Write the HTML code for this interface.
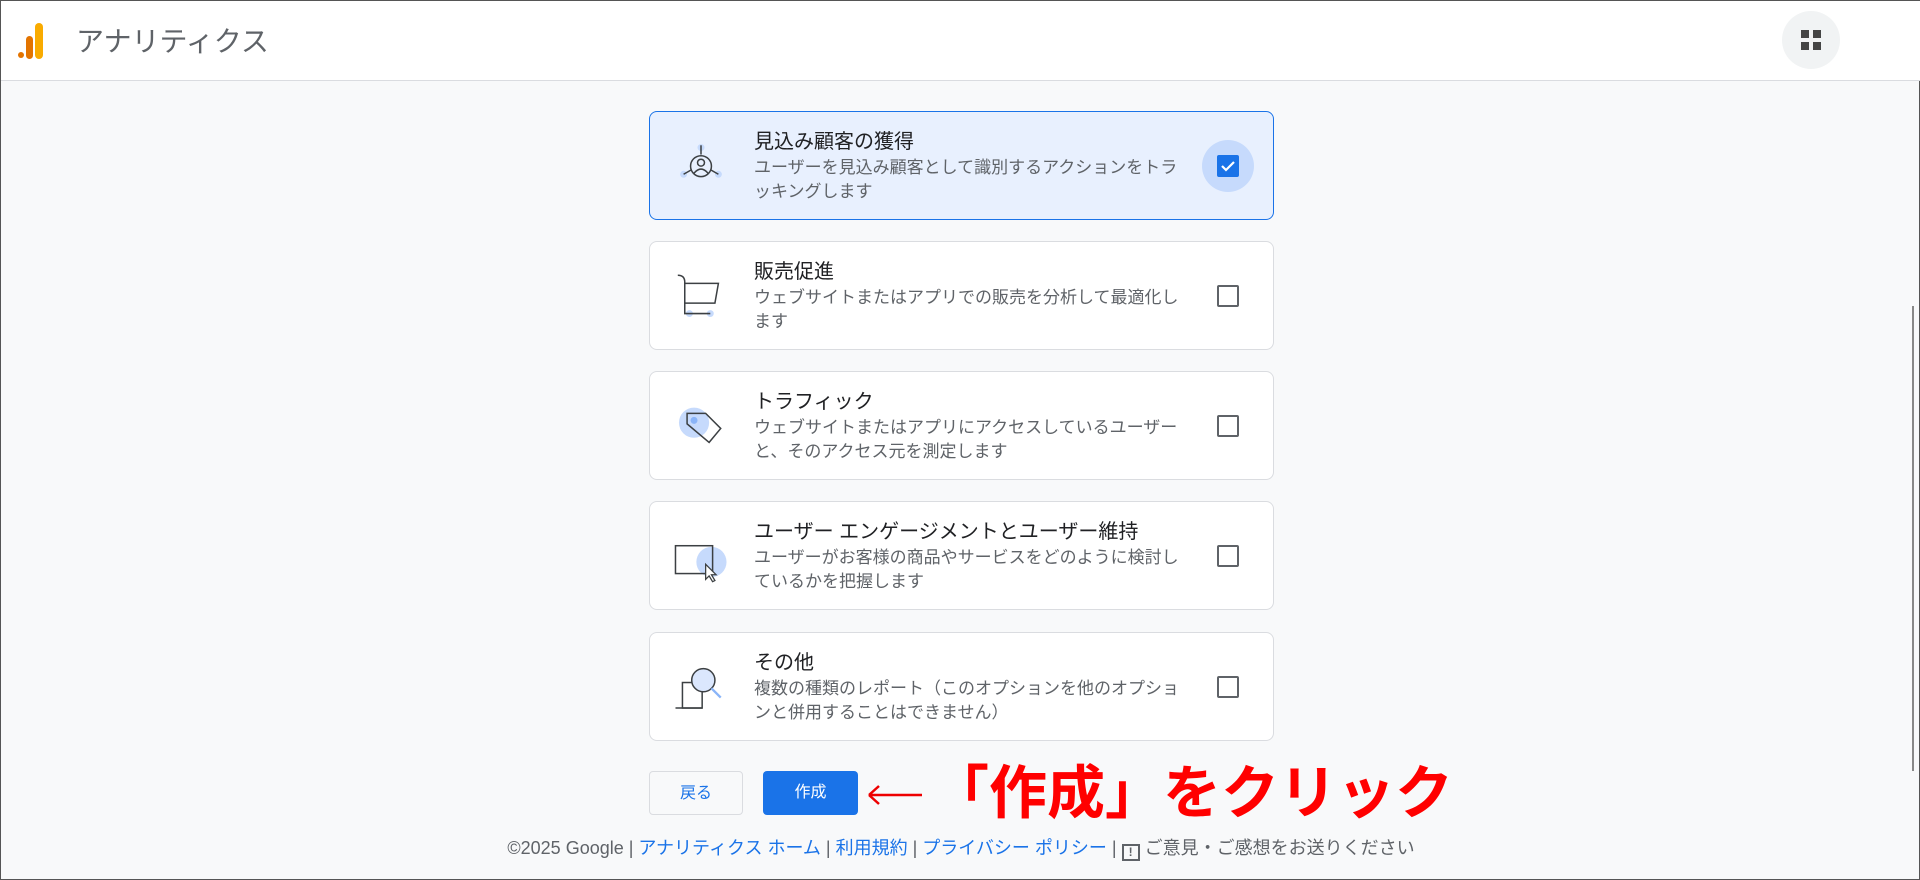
<!DOCTYPE html>
<html><head><meta charset="utf-8">
<style>
*{box-sizing:border-box;margin:0;padding:0}
body{width:1920px;height:880px;overflow:hidden;background:#f8f9fa;font-family:"Liberation Sans","Noto Sans CJK JP",sans-serif;position:relative;border:1px solid #555}
.hdr{position:absolute;left:0;top:0;width:1920px;height:80px;background:#fff;border-bottom:1px solid #dadce0}
.title{position:absolute;left:75px;top:19px;font-size:28px;color:#5f6368}
.apps{position:absolute;left:1781px;top:10px;width:58px;height:58px;border-radius:50%;background:#f1f3f4}
.card{position:absolute;left:648px;width:625px;height:109px;background:#fff;border:1px solid #dadce0;border-radius:8px}
.card.sel{background:#e8f0fe;border-color:#1a73e8}
.card .ic{position:absolute;left:22px;top:24px;width:58px;height:58px}
.card .t{position:absolute;left:104px;top:13px;font-size:20px;color:#202124}
.card .d{position:absolute;left:104px;top:44px;width:428px;font-size:17px;line-height:24px;color:#5f6368}
.cb{position:absolute;left:567px;top:43px;width:22px;height:22px;border:2px solid #5f6368;border-radius:2px}
.sel .halo{position:absolute;left:552px;top:28px;width:52px;height:52px;border-radius:50%;background:#c6dafc}
.sel .cb{background:#1a73e8;border-color:#1a73e8}
.btn{position:absolute;top:770px;height:44px;border-radius:4px;font-size:16px;text-align:center;line-height:44px}
.foot{position:absolute;left:0;width:1920px;top:833px;text-align:center;font-size:18px;color:#5f6368}
.foot a{color:#1a73e8;text-decoration:none}
</style></head><body>
<div class="hdr">
<svg style="position:absolute;left:17px;top:22px" width="26" height="36" viewBox="0 0 26 36"><rect x="17" y="0" width="8" height="36" rx="4" fill="#f9ab00"/><rect x="8" y="13" width="7" height="23" rx="3.5" fill="#e37400"/><circle cx="3" cy="32" r="3" fill="#e37400"/></svg>
<div class="title">アナリティクス</div>
<div class="apps"><svg style="position:absolute;left:19px;top:19px" width="20" height="20"><rect x="0" y="0" width="8" height="8" fill="#444"/><rect x="12" y="0" width="8" height="8" fill="#444"/><rect x="0" y="12" width="8" height="8" fill="#444"/><rect x="12" y="12" width="8" height="8" fill="#444"/></svg></div>
</div>

<div class="card sel" style="top:110px">
<svg class="ic" viewBox="0 0 50 50"><circle cx="25" cy="10" r="3" fill="#c6dafc"/><circle cx="10" cy="33" r="3" fill="#c6dafc"/><circle cx="40" cy="33" r="3" fill="#c6dafc"/><g fill="none" stroke="#3c4043" stroke-width="1.3"><line x1="25" y1="8" x2="25" y2="16"/><line x1="10" y1="33" x2="17" y2="29"/><line x1="40" y1="33" x2="33" y2="29"/><circle cx="25" cy="26" r="9"/><circle cx="25" cy="23" r="3"/><path d="M19 32 Q25 25 31 32"/></g></svg>
<div class="t">見込み顧客の獲得</div>
<div class="d">ユーザーを見込み顧客として識別するアクションをトラッキングします</div>
<div class="halo"></div>
<div class="cb"><svg width="18" height="18" viewBox="0 0 18 18"><path d="M3 9l4 4 8-8" fill="none" stroke="#fff" stroke-width="2.2"/></svg></div>
</div>

<div class="card" style="top:240px">
<svg class="ic" viewBox="0 0 50 50"><circle cx="15" cy="41" r="3" fill="#c6dafc"/><circle cx="33" cy="41" r="3" fill="#c6dafc"/><g fill="none" stroke="#3c4043" stroke-width="1.3"><path d="M5 8 Q11 8 11 14 V41 H33"/><path d="M11 15 H40 L37 32 H11"/></g></svg>
<div class="t">販売促進</div>
<div class="d">ウェブサイトまたはアプリでの販売を分析して最適化します</div>
<div class="cb"></div>
</div>

<div class="card" style="top:370px">
<svg class="ic" viewBox="0 0 50 50"><circle cx="19" cy="23" r="13" fill="#c6dafc"/><circle cx="19" cy="21" r="3" fill="#8ab4f8"/><path d="M13 15 H29 L42 28 L32 40 L13 24 Z" fill="none" stroke="#3c4043" stroke-width="1.3"/></svg>
<div class="t">トラフィック</div>
<div class="d">ウェブサイトまたはアプリにアクセスしているユーザーと、そのアクセス元を測定します</div>
<div class="cb"></div>
</div>

<div class="card" style="top:500px">
<svg class="ic" viewBox="0 0 50 50"><circle cx="34" cy="31" r="13" fill="#c6dafc"/><rect x="3" y="17" width="32" height="24" fill="none" stroke="#3c4043" stroke-width="1.3"/><path d="M29 33 L29 46 L32 43 L35 48 L37 47 L34 42 L38 42 Z" fill="#fff" stroke="#3c4043" stroke-width="1.1"/></svg>
<div class="t">ユーザー エンゲージメントとユーザー維持</div>
<div class="d">ユーザーがお客様の商品やサービスをどのように検討しているかを把握します</div>
<div class="cb"></div>
</div>

<div class="card" style="top:631px">
<svg class="ic" viewBox="0 0 50 50"><g fill="none" stroke="#3c4043" stroke-width="1.3"><rect x="9" y="22" width="17" height="22"/><circle cx="27" cy="20" r="10" fill="#dbe7fd"/><line x1="34" y1="27" x2="42" y2="35" stroke="#8ab4f8" stroke-width="2"/><line x1="3" y1="44" x2="26" y2="44"/></g></svg>
<div class="t">その他</div>
<div class="d">複数の種類のレポート（このオプションを他のオプションと併用することはできません）</div>
<div class="cb"></div>
</div>

<div class="btn" style="left:648px;width:94px;border:1px solid #dadce0;color:#1a73e8;background:#f8f9fa">戻る</div>
<div class="btn" style="left:762px;width:95px;background:#1a73e8;color:#fff">作成</div>
<svg style="position:absolute;left:866px;top:782px" width="56" height="24" viewBox="0 0 56 24"><path d="M2 12 H55 M2 12 L12 3 M2 12 L12 21" fill="none" stroke="#e00" stroke-width="2.5"/></svg>
<div style="position:absolute;left:930px;top:760px;font-size:58px;font-weight:bold;color:#f00;line-height:66px">「作成」をクリック</div>

<div class="foot">©2025 Google | <a>アナリティクス ホーム</a> | <a>利用規約</a> | <a>プライバシー ポリシー</a> | <span style="display:inline-block;width:18px;height:17px;border:2px solid #5f6368;vertical-align:-2px;font-size:12px;line-height:13px;font-weight:bold;text-align:center">!</span> ご意見・ご感想をお送りください</div>
<div style="position:absolute;left:1911px;top:305px;width:2px;height:465px;background:#888"></div>
</body></html>
